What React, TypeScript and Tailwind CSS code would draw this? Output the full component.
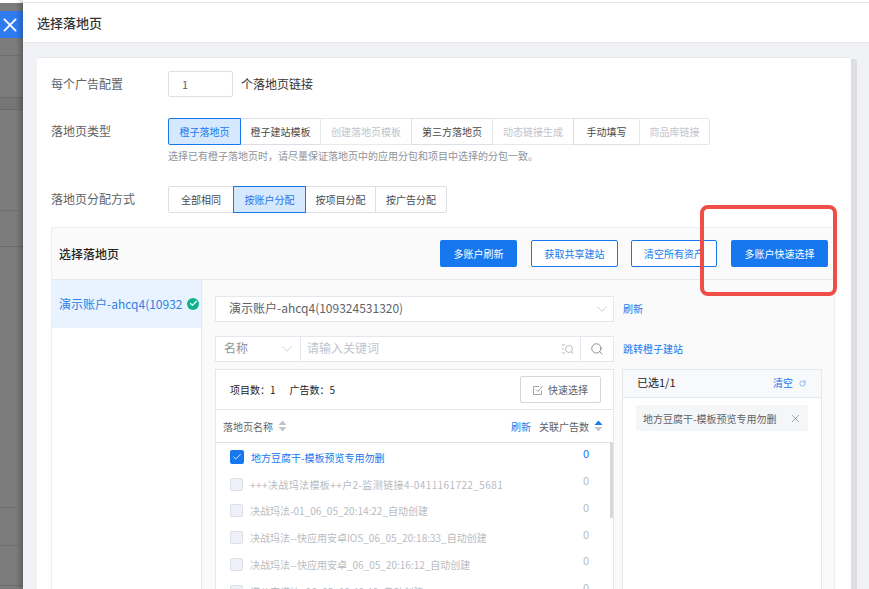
import { X, ChevronDown, Search, RotateCw, Check } from "lucide-react";

const typeTabs = [
  { label: "橙子落地页", w: "w-[73px]", state: "active" },
  { label: "橙子建站模板", w: "w-[81px]", state: "normal" },
  { label: "创建落地页模板", w: "w-[92px]", state: "disabled" },
  { label: "第三方落地页", w: "w-[82px]", state: "normal" },
  { label: "动态链接生成", w: "w-[82px]", state: "disabled" },
  { label: "手动填写", w: "w-[67px]", state: "normal" },
  { label: "商品库链接", w: "w-[71px]", state: "disabled" },
];

const assignTabs = [
  { label: "全部相同", w: "w-[66px]", state: "normal" },
  { label: "按账户分配", w: "w-[73px]", state: "active" },
  { label: "按项目分配", w: "w-[71px]", state: "normal" },
  { label: "按广告分配", w: "w-[72px]", state: "normal" },
];

const rows = [
  { name: "地方豆腐干-模板预览专用勿删", checked: true },
  { name: "+++决战玛法模板++户2-监测链接4-0411161722_5681", checked: false, wide: true },
  { name: "决战玛法-01_06_05_20:14:22_自动创建", checked: false },
  { name: "决战玛法--快应用安卓IOS_06_05_20:18:33_自动创建", checked: false },
  { name: "决战玛法--快应用安卓_06_05_20:16:12_自动创建", checked: false },
  { name: "模公审模块_06_05_19:40:46_自动创建", checked: false },
];

function Tab({ label, w, state }: { label: string; w: string; state: string }) {
  let color = "border-[#dcdfe6] bg-white text-[#4a4a4a]";
  if (state === "active") color = "relative z-10 border-[#1677ee] bg-[#d6e8fd] text-[#1677ee]";
  if (state === "disabled") color = "border-[#e6e8ec] bg-white text-[#c0c4cc]";
  return (
    <div className={`-mr-px flex h-[27px] shrink-0 items-center justify-center border pb-px text-[10px] first:rounded-l-[2px] last:rounded-r-[2px] ${w} ${color}`}>
      {label}
    </div>
  );
}

function SortIcon({ active }: { active?: boolean }) {
  return (
    <svg width="9" height="12" viewBox="0 0 9 12" className="shrink-0">
      <path d="M4.5 0.5 8.5 5H0.5Z" fill={active ? "#1677ee" : "#c0c4cc"} />
      <path d="M4.5 11.5 8.5 7H0.5Z" fill="#c0c4cc" />
    </svg>
  );
}

export default function App() {
  return (
    <div className="relative flex h-[589px] w-[869px] overflow-hidden bg-white font-['Noto_Sans_CJK_SC','Liberation_Sans',sans-serif] text-[#606266]">
      <div className="flex w-[23px] shrink-0 flex-col bg-[#7c7c7c]">
        <div className="h-[3px] shrink-0 bg-white" />
        <div className="mt-[8px] flex h-[27px] shrink-0 items-center bg-[#2f7cf0] pl-[3px] text-white">
          <X size={14} strokeWidth={2} className="scale-[1.6]" />
        </div>
        <div className="mt-[17px] h-px w-[19px] shrink-0 bg-[#6f6f6f]" />
        <div className="mt-[41px] h-[13px] shrink-0 border-y border-[#6b6b6b] bg-[#767676]" />
        <div className="mt-[100px] h-px w-[19px] shrink-0 bg-[#6f6f6f]" />
        <div className="mt-[35px] h-px shrink-0 bg-[#6a6a6a]" />
        <div className="mt-[260px] h-px w-[16px] shrink-0 bg-[#6f6f6f]" />
        <div className="mt-[37px] h-px w-[19px] shrink-0 bg-[#6f6f6f]" />
        <div className="mt-[39px] h-px shrink-0 bg-[#6a6a6a]" />
      </div>

      <div className="flex min-w-0 flex-1 flex-col shadow-[-3px_0_5px_rgba(0,0,0,0.25)]">
        <div className="mt-[2px] h-px bg-[#e4e6ea]" />
        <div className="flex h-[40px] shrink-0 items-center border-b border-[#e8eaee] bg-white pl-[14px] text-[13px] font-medium text-[#333333]">
          选择落地页
        </div>

        <div className="flex min-h-0 flex-1 bg-[#f0f2f5] pl-[14px] pr-[18px] pt-[14px]">
          <div className="min-w-0 flex-1 rounded-tr-[3px] border-t border-[#e6e8ec] bg-white pl-[14px] pr-[16px] pt-[13px] shadow-[6px_2px_0_#dcdee2]">
            <div className="flex h-[26px] items-center">
              <span className="w-[117px] text-[12px] text-[#606266]">每个广告配置</span>
              <div className="flex h-[26px] w-[65px] items-center rounded-[2px] border border-[#dcdfe6] pl-[13px] text-[11px]">1</div>
              <span className="ml-[8px] text-[12px] text-[#333333]">个落地页链接</span>
            </div>

            <div className="mt-[21px] flex">
              <span className="w-[117px] pt-[4px] text-[12px]">落地页类型</span>
              <div>
                <div className="flex">
                  {typeTabs.map((t) => (
                    <Tab key={t.label} {...t} />
                  ))}
                </div>
                <p className="mt-[4px] text-[10px] leading-[14px] text-[#909399]">
                  选择已有橙子落地页时，请尽量保证落地页中的应用分包和项目中选择的分包一致。
                </p>
              </div>
            </div>

            <div className="mt-[23px] flex items-center">
              <span className="w-[117px] pb-px text-[12px]">落地页分配方式</span>
              <div className="flex">
                {assignTabs.map((t) => (
                  <Tab key={t.label} {...t} />
                ))}
              </div>
            </div>

            <div className="mt-[14px] border-x border-t border-[#ebeef5]">
              <div className="flex h-[52px] items-center border-b border-[#e4e7ed] bg-[#fafafa] pl-[7px] pr-[6px]">
                <span className="flex-1 text-[12px] font-medium text-[#222222]">选择落地页</span>
                <div className="flex gap-[14px]">
                  <div className="flex h-[27px] w-[77px] items-center justify-center rounded-[2px] bg-[#1677ee] text-[10px] text-white">多账户刷新</div>
                  <div className="flex h-[27px] w-[87px] items-center justify-center rounded-[2px] border border-[#1677ee] bg-white text-[10px] text-[#1677ee]">获取共享建站</div>
                  <div className="-ml-px flex h-[27px] w-[86px] items-center justify-center rounded-[2px] border border-[#1677ee] bg-white text-[10px] text-[#1677ee]">清空所有资产</div>
                  <div className="flex h-[27px] w-[97px] items-center justify-center rounded-[2px] bg-[#1677ee] text-[10px] text-white">多账户快速选择</div>
                </div>
              </div>

              <div className="flex h-[310px]">
                <div className="w-[150px] shrink-0 border-r border-[#e4e7ed] bg-white">
                  <div className="flex h-[48px] items-center justify-between border-b border-[#ebeef5] bg-[#e8f3ff] pl-[7px] pr-[2px]">
                    <span className="whitespace-nowrap text-[12px] text-[#2f7fe6]">演示账户-ahcq4(10932</span>
                    <span className="flex h-[12px] w-[12px] items-center justify-center rounded-full bg-[#10b38b] text-white">
                      <Check size={9} strokeWidth={3} />
                    </span>
                  </div>
                </div>

                <div className="flex min-w-0 flex-1 flex-col bg-[#fafafa] pl-[13px] pt-[16px]">
                  <div className="flex items-center">
                    <div className="flex h-[26px] w-[399px] items-center justify-between border border-[#e4e7ed] bg-white pl-[13px] pr-[2px] text-[12px] text-[#606266]">
                      <span className="pb-[2px]">演示账户-ahcq4(109324531320)</span>
                      <ChevronDown size={18} strokeWidth={0.8} className="text-[#b0b4bb]" />
                    </div>
                    <span className="ml-[9px] pb-[2px] text-[10px] text-[#1677ee]">刷新</span>
                  </div>

                  <div className="mt-[14px] flex items-center">
                    <div className="flex h-[26px] w-[399px] border border-[#e4e7ed] bg-white">
                      <div className="flex w-[85px] items-center justify-between border-r border-[#e4e7ed] pl-[8px] pr-[4px] text-[12px] text-[#909399]">
                        <span className="pb-[2px]">名称</span>
                        <ChevronDown size={18} strokeWidth={0.8} className="text-[#b0b4bb]" />
                      </div>
                      <div className="flex flex-1 items-center justify-between pl-[6px] pr-[6px] text-[12px] text-[#c0c4cc]">
                        <span className="pb-[2px]">请输入关键词</span>
                        <svg width="13" height="13" viewBox="0 0 13 13" fill="none" stroke="#b8bbc2" strokeWidth="1">
                          <path d="M1 2h3M1 6h2M1 10h3" />
                          <circle cx="8" cy="6" r="3.5" />
                          <path d="M10.5 8.5 12 11" />
                        </svg>
                      </div>
                      <div className="flex w-[33px] items-center justify-center border-l border-[#e4e7ed]">
                        <Search size={14} strokeWidth={1.1} className="text-[#555555]" />
                      </div>
                    </div>
                    <span className="ml-[9px] whitespace-nowrap pb-[2px] text-[10px] text-[#1677ee]">跳转橙子建站</span>
                  </div>

                  <div className="mt-[7px] flex min-h-0 flex-1 gap-[8px]">
                    <div className="flex w-[399px] flex-col overflow-hidden border border-b-0 border-[#e4e7ed] bg-white">
                      <div className="flex h-[40px] shrink-0 items-center justify-between border-b border-[#e4e7ed] pl-[14px] pr-[12px] text-[10px] text-[#222222]">
                        <span>
                          项目数：1<span className="ml-[14px]">广告数：5</span>
                        </span>
                        <div className="flex h-[27px] w-[81px] items-center justify-center gap-[5px] rounded-[2px] border border-[#d4d7dd] text-[#606266]">
                          <svg width="10" height="10" viewBox="0 0 10 10" fill="none" stroke="#8a8d93" strokeWidth="0.8">
                            <path d="M8.5 5.5v4h-8v-8h6" />
                            <path d="M3 4.5 5 6.5 9.5 1" />
                          </svg>
                          快速选择
                        </div>
                      </div>
                      <div className="flex h-[33px] shrink-0 items-center border-b border-[#dcdfe6] pl-[7px] pr-[10px] text-[10px] text-[#606266]">
                        <span>落地页名称</span>
                        <span className="ml-[5px]"><SortIcon /></span>
                        <span className="ml-auto text-[#1677ee]">刷新</span>
                        <span className="ml-[8px]">关联广告数</span>
                        <span className="ml-[5px]"><SortIcon active /></span>
                      </div>
                      <div className="relative min-h-0 flex-1 pt-px">
                        <div className="absolute right-0 top-0 h-[75px] w-[3px] bg-[#d8d8d8]" />
                        {rows.map((r) => (
                          <div key={r.name} className="flex h-[26.8px] items-center pl-[14px] pr-[24px] text-[10px]">
                            {r.checked ? (
                              <span className="flex h-[14px] w-[14px] shrink-0 items-center justify-center rounded-[2px] bg-[#1677ee] text-white">
                                <Check size={10} strokeWidth={2} />
                              </span>
                            ) : (
                              <span className="h-[13px] w-[13px] shrink-0 rounded-[2px] border border-[#dcdfe6] bg-[#eef1f8]" />
                            )}
                            <span className={`ml-[7px] flex-1 whitespace-nowrap ${r.checked ? "text-[#1677ee]" : "text-[#b8bbc2]"} ${r.wide ? "tracking-[0.4px]" : ""}`}>{r.name}</span>
                            <span className={`-mt-[8px] text-[11px] ${r.checked ? "text-[#1677ee]" : "text-[#b8bbc2]"}`}>0</span>
                          </div>
                        ))}
                      </div>
                    </div>

                    <div className="flex w-[200px] flex-col border border-b-0 border-[#e4e7ed] bg-white">
                      <div className="flex h-[28px] shrink-0 items-center justify-between border-b border-[#e4e7ed] bg-[#f7f9fc] pl-[14px] pr-[15px] text-[10px]">
                        <span className="pb-[2px] text-[11px] text-[#222222]">已选1/1</span>
                        <span className="flex items-center gap-[6px] text-[#1677ee]">
                          <span className="pb-[2px]">清空</span>
                          <RotateCw size={7} strokeWidth={1.5} />
                        </span>
                      </div>
                      <div className="px-[13px] pt-[7px]">
                        <div className="flex h-[26px] items-center justify-between bg-[#f5f6f8] pl-[7px] pr-[6px] text-[10px] text-[#606266]">
                          地方豆腐干-模板预览专用勿删
                          <X size={13} strokeWidth={1} />
                        </div>
                      </div>
                    </div>
                  </div>
                </div>
              </div>
            </div>
          </div>
        </div>
      </div>

      <div className="absolute left-[700px] top-[205px] h-[91px] w-[137px] rounded-[8px] border-[4px] border-[#ee4d48]" />
    </div>
  );
}
